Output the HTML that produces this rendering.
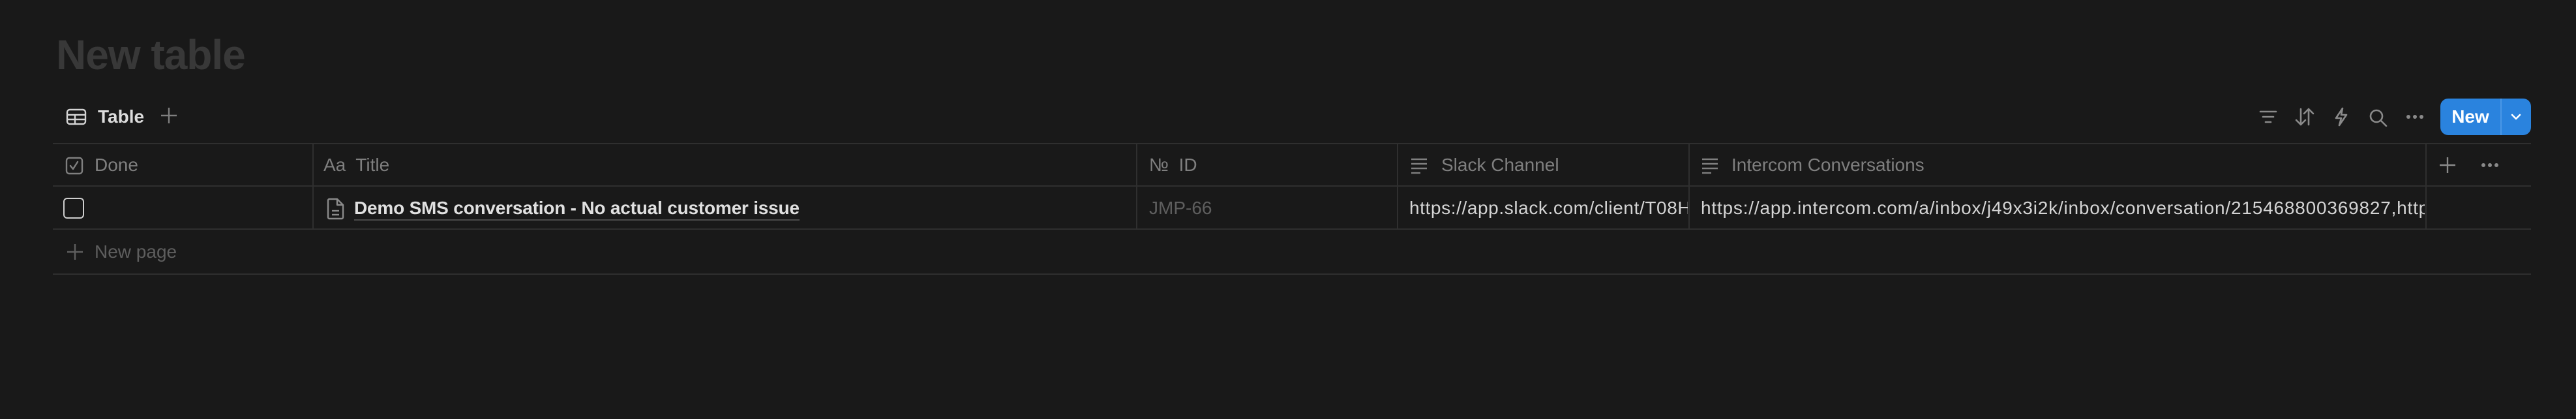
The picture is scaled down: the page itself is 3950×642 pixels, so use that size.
<!DOCTYPE html>
<html><head><meta charset="utf-8"><style>
*{margin:0;padding:0;box-sizing:border-box}
body{width:3950px;height:642px;background:#191919;position:relative;overflow:hidden;font-family:"Liberation Sans",sans-serif}
.a{position:absolute;white-space:nowrap}
.h{color:#7f7f7f;font-size:28px}
.t{color:#d4d4d4;font-size:28px}
.hl{position:absolute;height:2px;background:#2f2f2f;left:81px;width:3800px}
.vl{position:absolute;width:2px;background:#2f2f2f;top:220px;height:131px}
svg{position:absolute}
</style></head><body>
<div class="a" style="left:86px;top:46px;font-size:64px;font-weight:bold;color:#383838;line-height:76px;letter-spacing:-1px">New table</div>

<svg style="left:101px;top:166px" width="32" height="26" viewBox="0 0 32 26" fill="none" stroke="#d4d4d4" stroke-width="2.4"><rect x="2" y="2" width="28" height="22" rx="4"/><line x1="2" y1="10" x2="30" y2="10"/><line x1="2" y1="17" x2="30" y2="17"/><line x1="14" y1="10" x2="14" y2="24"/></svg>
<div class="a" style="left:150px;top:160px;font-size:28px;font-weight:bold;color:#dcdcdc;line-height:38px">Table</div>
<svg style="left:246px;top:164px" width="26" height="26" viewBox="0 0 26 26" stroke="#7f7f7f" stroke-width="2.4"><line x1="13" y1="1" x2="13" y2="25"/><line x1="1" y1="13" x2="25" y2="13"/></svg>

<svg style="left:3464px;top:168px" width="28" height="22" viewBox="0 0 28 22" stroke="#8a8a8a" stroke-width="2.6" stroke-linecap="round"><line x1="2" y1="3" x2="26" y2="3"/><line x1="6" y1="11" x2="22" y2="11"/><line x1="10" y1="19" x2="18" y2="19"/></svg>
<svg style="left:3519px;top:165px" width="30" height="28" viewBox="0 0 30 28" fill="none" stroke="#8a8a8a" stroke-width="2.6" stroke-linecap="round" stroke-linejoin="round"><path d="M9 2v24M2 19l7 7 7-7"/><path d="M21 26V2M14 9l7-7 7 7"/></svg>
<svg style="left:3579px;top:164px" width="22" height="30" viewBox="0 0 22 30" fill="none" stroke="#8a8a8a" stroke-width="2.6" stroke-linejoin="round"><path d="M13 2L3 17h8l-3 11 11-16h-8z"/></svg>
<svg style="left:3632px;top:166px" width="30" height="28" viewBox="0 0 30 28" fill="none" stroke="#8a8a8a" stroke-width="2.6" stroke-linecap="round"><circle cx="12" cy="12" r="9"/><line x1="19" y1="19" x2="27" y2="27"/></svg>
<svg style="left:3689px;top:175px" width="28" height="8" viewBox="0 0 28 8" fill="#8a8a8a"><circle cx="4" cy="4" r="3"/><circle cx="14" cy="4" r="3"/><circle cx="24" cy="4" r="3"/></svg>

<div class="a" style="left:3742px;top:151px;width:139px;height:56px;background:#2a83de;border-radius:12px"></div>
<div class="a" style="left:3834px;top:151px;width:2px;height:56px;background:#4b97e6"></div>
<div class="a" style="left:3742px;top:151px;width:92px;height:56px;line-height:56px;text-align:center;color:#fff;font-size:28px;font-weight:bold">New</div>
<svg style="left:3849px;top:173px" width="18" height="12" viewBox="0 0 18 12" fill="none" stroke="#fff" stroke-width="2.6" stroke-linecap="round" stroke-linejoin="round"><path d="M3 3l6 6 6-6"/></svg>

<div class="hl" style="top:219px"></div>
<div class="hl" style="top:284px"></div>
<div class="hl" style="top:350px"></div>
<div class="hl" style="top:419px"></div>
<div class="vl" style="left:479px"></div>
<div class="vl" style="left:1742px"></div>
<div class="vl" style="left:2142px"></div>
<div class="vl" style="left:2589px"></div>
<div class="vl" style="left:3719px"></div>

<svg style="left:100px;top:240px" width="28" height="28" viewBox="0 0 28 28" fill="none" stroke="#7f7f7f" stroke-width="2.4" stroke-linecap="round" stroke-linejoin="round"><rect x="2" y="2" width="24" height="24" rx="4"/><path d="M8 14l4 5 7-11"/></svg>
<div class="a h" style="left:145px;top:236px;line-height:34px">Done</div>
<div class="a h" style="left:496px;top:236px;line-height:34px">Aa&nbsp; Title</div>
<div class="a h" style="left:1762px;top:236px;line-height:34px">№&nbsp; ID</div>
<svg style="left:2163px;top:241px" width="26" height="26" viewBox="0 0 26 26" stroke="#7f7f7f" stroke-width="2.4"><line x1="1" y1="3" x2="25" y2="3"/><line x1="1" y1="10" x2="25" y2="10"/><line x1="1" y1="17" x2="25" y2="17"/><line x1="1" y1="24" x2="15" y2="24"/></svg>
<div class="a h" style="left:2210px;top:236px;line-height:34px">Slack Channel</div>
<svg style="left:2609px;top:241px" width="26" height="26" viewBox="0 0 26 26" stroke="#7f7f7f" stroke-width="2.4"><line x1="1" y1="3" x2="25" y2="3"/><line x1="1" y1="10" x2="25" y2="10"/><line x1="1" y1="17" x2="25" y2="17"/><line x1="1" y1="24" x2="15" y2="24"/></svg>
<div class="a h" style="left:2655px;top:236px;line-height:34px">Intercom Conversations</div>
<svg style="left:3741px;top:241px" width="24" height="24" viewBox="0 0 24 24" stroke="#8a8a8a" stroke-width="2.4"><line x1="12" y1="0" x2="12" y2="24"/><line x1="0" y1="12" x2="24" y2="12"/></svg>
<svg style="left:3804px;top:249px" width="28" height="8" viewBox="0 0 28 8" fill="#8a8a8a"><circle cx="4" cy="4" r="3"/><circle cx="14" cy="4" r="3"/><circle cx="24" cy="4" r="3"/></svg>

<div class="a" style="left:97px;top:303px;width:32px;height:32px;border:2.5px solid #cfcfcf;border-radius:6px"></div>
<svg style="left:501px;top:303px" width="28" height="34" viewBox="0 0 28 34" fill="none" stroke="#8a8a8a" stroke-width="2.4" stroke-linejoin="round"><path d="M4 2h12l9 9v19a2 2 0 0 1-2 2H4a2 2 0 0 1-2-2V4a2 2 0 0 1 2-2z"/><path d="M16 2v9h9"/><line x1="8" y1="20" x2="19" y2="20"/><line x1="8" y1="26" x2="19" y2="26"/></svg>
<div class="a t" style="left:543px;top:302px;line-height:34px;font-weight:bold;color:#e0e0e0;border-bottom:2px solid #4a4a4a;letter-spacing:-0.2px">Demo SMS conversation - No actual customer issue</div>
<div class="a" style="left:1762px;top:302px;line-height:34px;font-size:28px;color:#5e5e5e">JMP-66</div>
<div class="a" style="left:2161px;top:302px;width:427px;height:40px;overflow:hidden"><div class="a t" style="left:0;top:0;line-height:34px;letter-spacing:0.6px">https://app.slack.com/client/T08H7XQ</div></div>
<div class="a" style="left:2608px;top:302px;width:1110px;height:40px;overflow:hidden"><div class="a t" style="left:0;top:0;line-height:34px;letter-spacing:0.8px">https://app.intercom.com/a/inbox/j49x3i2k/inbox/conversation/215468800369827,https://app.intercom.com</div></div>

<svg style="left:102px;top:373px" width="26" height="26" viewBox="0 0 26 26" stroke="#5e5e5e" stroke-width="2.4"><line x1="13" y1="1" x2="13" y2="25"/><line x1="1" y1="13" x2="25" y2="13"/></svg>
<div class="a" style="left:145px;top:369px;line-height:34px;font-size:28px;color:#5e5e5e">New page</div>
</body></html>
